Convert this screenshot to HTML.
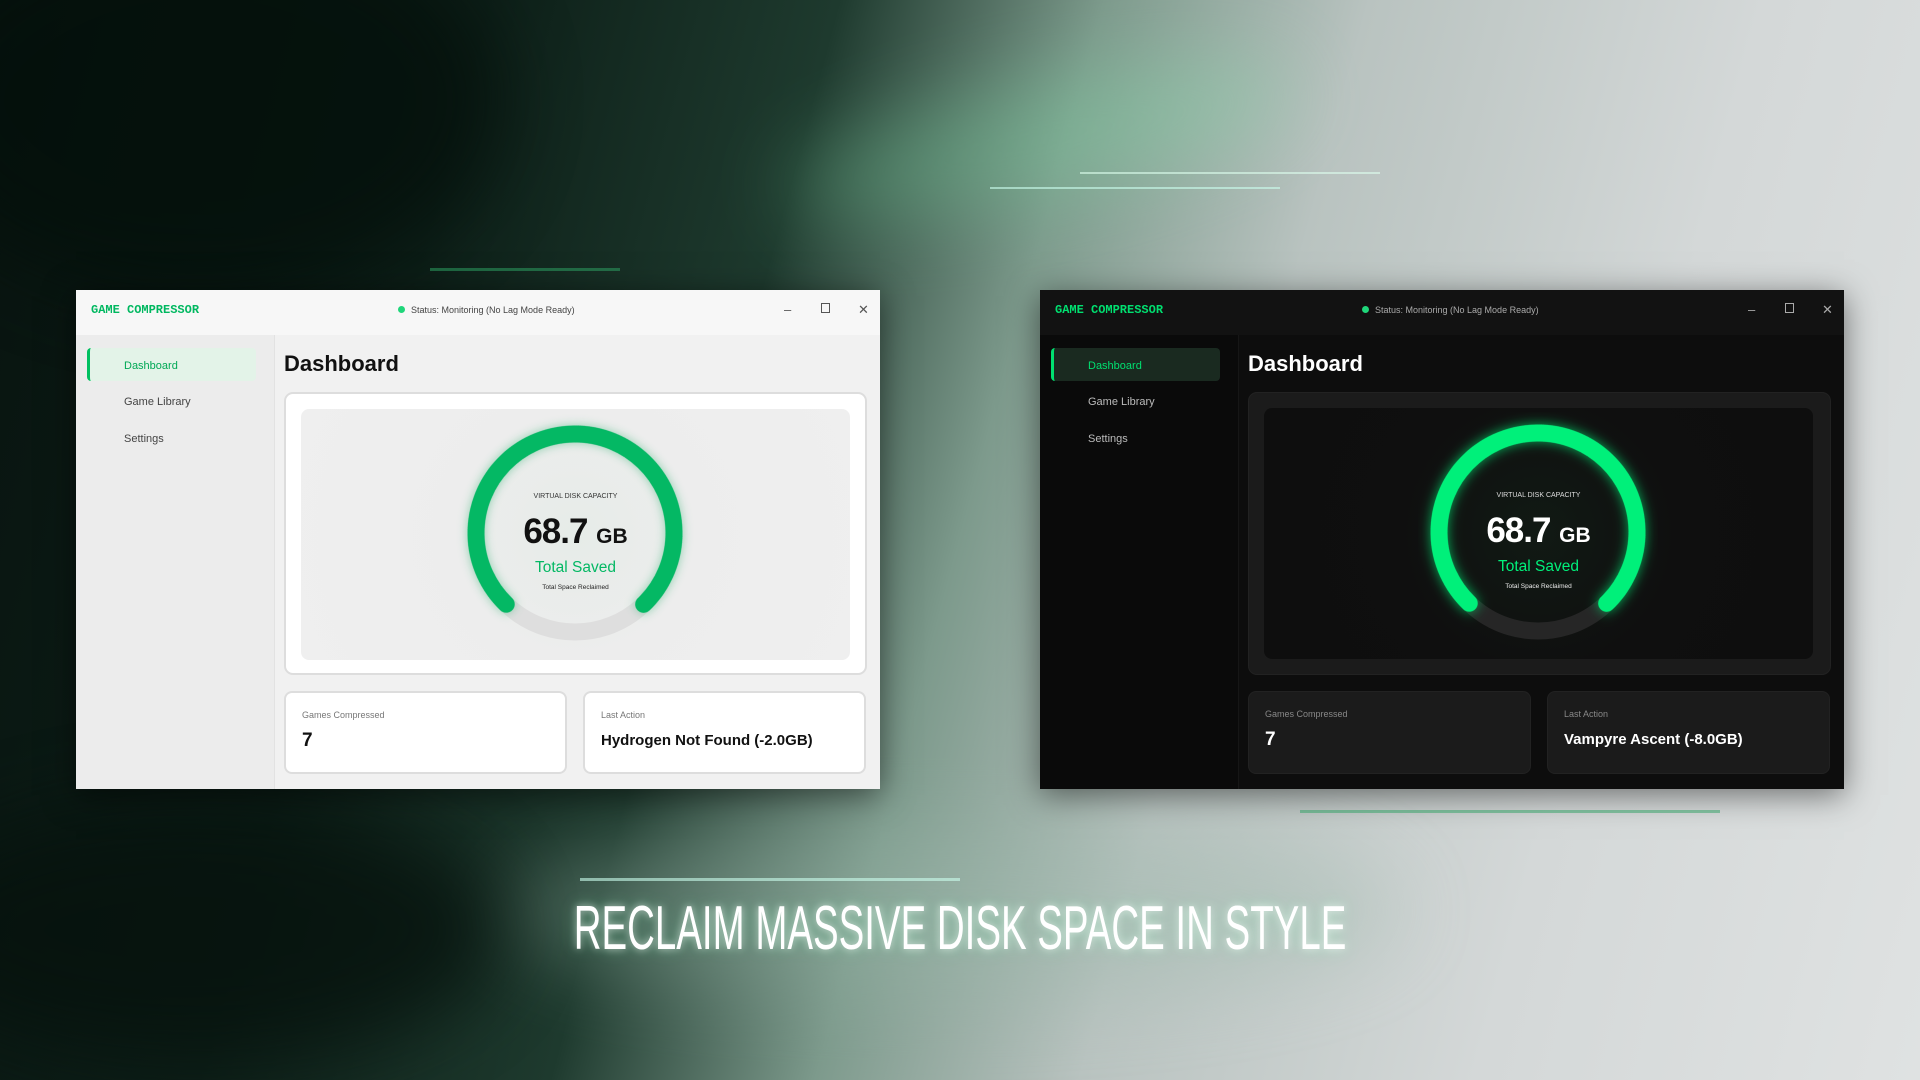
<!DOCTYPE html>
<html style="overflow:hidden;width:1920px;height:1080px"><head><meta charset="utf-8"><style>
*{margin:0;padding:0;box-sizing:border-box}
html,body{width:1920px;height:1080px;overflow:hidden}
body{position:relative;font-family:"Liberation Sans",sans-serif;
background:linear-gradient(105deg,#08130f 0%,#0d1f18 22%,#1e3a2e 38%,#7d9a8c 50%,#b9c3c0 62%,#d4d8d8 80%,#dfe2e2 100%)}
#bg{position:absolute;left:0;top:0;width:1920px;height:1080px;overflow:hidden}
.glow{position:absolute;border-radius:50%;filter:blur(40px)}
.line{position:absolute;height:3px;background:#2fae6a;opacity:.5}
.win{position:absolute;top:290px;width:804px;height:499px;overflow:hidden;box-shadow:0 6px 30px rgba(0,0,0,.5)}
.tb{position:absolute;left:0;top:0;width:100%;height:45px}
.logo{position:absolute;left:15px;top:13px;font:bold 12px "Liberation Mono",monospace;color:#00b860;letter-spacing:0}
.status{position:absolute;left:322px;top:15px;font-size:9px}
.status i{display:inline-block;width:7px;height:7px;border-radius:50%;background:#1fd67a;margin-right:6px;vertical-align:0}
.ctl{position:absolute;top:12px;font-size:13px}
.side{position:absolute;left:0;top:45px;width:199px;bottom:0}
.nav{position:absolute;left:11px;width:169px;height:33px;font-size:11px;padding:12px 0 0 37px}
.nav.act{border-left:3px solid #00c060;border-radius:4px;padding-left:34px}
.foot{position:absolute;left:8px;top:459px;width:172px;height:35px;border-radius:6px;text-align:center;font-size:7.5px;padding-top:5px;line-height:12px}
.main{position:absolute;left:199px;top:45px;right:0;bottom:0}
h1{position:absolute;left:9px;top:16px;font-size:22px;font-weight:bold}
.card{position:absolute;left:9px;top:57px;width:583px;height:283px;border-radius:9px}
.inner{position:absolute;left:15px;top:15px;width:549px;height:251px;border-radius:8px;overflow:hidden}
.g{position:absolute;left:154px;top:4px;width:240px;height:240px}
.t{position:absolute;width:100%;text-align:center;left:0}
.sc{position:absolute;top:356px;width:283px;height:83px;border-radius:8px}
.sc .l{position:absolute;left:16px;top:17px;font-size:9px}
.sc .v{position:absolute;left:16px;top:37px;font-weight:bold}
</style></head><body>
<div id="bg">
<div class="glow" style="left:780px;top:80px;width:520px;height:120px;background:#7fe0a8;opacity:.3;transform:rotate(-12deg)"></div>
<div class="glow" style="left:500px;top:820px;width:900px;height:180px;background:#9ab8aa;opacity:.35"></div>
<div class="glow" style="left:-100px;top:-100px;width:600px;height:400px;background:#04100b;opacity:.8"></div>
<div class="glow" style="left:-100px;top:800px;width:600px;height:260px;background:#06120d;opacity:.8"></div>
<div class="line" style="left:990px;top:187px;width:290px;height:2px;background:#cfe;opacity:.6"></div>
<div class="line" style="left:1080px;top:172px;width:300px;height:2px;background:#dfe;opacity:.6"></div>
<div class="line" style="left:430px;top:268px;width:190px"></div>
<div class="line" style="left:1300px;top:810px;width:420px"></div>
<div class="line" style="left:580px;top:878px;width:380px;background:#cfe;opacity:.6"></div>
<div style="position:absolute;left:0;top:893px;width:1920px;text-align:center;white-space:nowrap">
 <span style="display:inline-block;font-family:'Liberation Sans Narrow','Liberation Sans',sans-serif;font-size:62px;color:#fff;transform:scaleX(.62);transform-origin:center;text-shadow:0 0 10px rgba(255,255,255,.6),0 0 20px rgba(120,255,180,.4)">RECLAIM MASSIVE DISK SPACE IN STYLE</span>
</div>
</div>

<!-- light window -->
<div class="win" style="left:76px;background:#f4f4f4">
 <div class="tb" style="background:#f7f7f7">
  <div class="logo">GAME COMPRESSOR</div>
  <div class="status" style="color:#444"><i></i>Status: Monitoring (No Lag Mode Ready)</div>
  <div class="ctl" style="left:708px;color:#555">–</div>
  <div class="ctl" style="left:745px;top:13px;width:9px;height:10px;border:1.2px solid #555"></div>
  <div class="ctl" style="left:782px;color:#555">✕</div>
 </div>
 <div class="side" style="background:#ececec;border-right:1px solid #e2e2e2">
  <div class="nav act" style="top:13px;background:#e3f3e8;color:#00a855">Dashboard</div>
  <div class="nav" style="top:49px;color:#444">Game Library</div>
  <div class="nav" style="top:86px;color:#444">Settings</div>
  <div class="foot" style="background:#e7e7e7;color:#999">GameCompressor v0.9<br><span style="color:#bbb;font-size:6.5px">Stonepit Sons Software</span></div>
 </div>
 <div class="main" style="background:#f1f1f1">
  <h1 style="color:#111">Dashboard</h1>
  <div class="card" style="background:#fff;border:2px solid #ddd">
   <div class="inner" style="background:radial-gradient(circle at 50% 50%,#e6ece8 0,#ededed 40%,#efefef 100%)">
    <svg class="g" viewBox="0 0 240 240"><circle cx="120" cy="120" r="99" fill="none" stroke="#dedede" stroke-width="17"/>
     <circle cx="120" cy="120" r="99" fill="none" stroke="#04b864" stroke-width="17" stroke-linecap="round" stroke-dasharray="470 1000" transform="rotate(134 120 120)" style="filter:drop-shadow(0 0 5px rgba(0,160,80,.4))"/></svg>
    <div class="t" style="top:84px;font-size:7px;color:#333">VIRTUAL DISK CAPACITY</div>
    <div class="t" style="top:103px;font-size:35px;font-weight:bold;color:#111;letter-spacing:-1px">68.7 <span style="font-size:21px;letter-spacing:0">GB</span></div>
    <div class="t" style="top:150px;font-size:15.5px;color:#04b864">Total Saved</div>
    <div class="t" style="top:175px;font-size:6.5px;color:#222">Total Space Reclaimed</div>
   </div>
  </div>
  <div class="sc" style="left:9px;background:#fff;border:2px solid #ddd"><div class="l" style="color:#777">Games Compressed</div><div class="v" style="font-size:19px;color:#111">7</div></div>
  <div class="sc" style="left:308px;background:#fff;border:2px solid #ddd"><div class="l" style="color:#777">Last Action</div><div class="v" style="font-size:15px;color:#111;top:39px">Hydrogen Not Found (-2.0GB)</div></div>
 </div>
</div>

<!-- dark window -->
<div class="win" style="left:1040px;background:#0c0c0c">
 <div class="tb" style="background:#121212">
  <div class="logo" style="color:#00e070">GAME COMPRESSOR</div>
  <div class="status" style="color:#aaa"><i></i>Status: Monitoring (No Lag Mode Ready)</div>
  <div class="ctl" style="left:708px;color:#aaa">–</div>
  <div class="ctl" style="left:745px;top:13px;width:9px;height:10px;border:1.2px solid #aaa"></div>
  <div class="ctl" style="left:782px;color:#aaa">✕</div>
 </div>
 <div class="side" style="background:#0a0a0a;border-right:1px solid #161616">
  <div class="nav act" style="top:13px;background:#1a2a20;color:#00e070;border-left-color:#00e070">Dashboard</div>
  <div class="nav" style="top:49px;color:#bbb">Game Library</div>
  <div class="nav" style="top:86px;color:#bbb">Settings</div>
  <div class="foot" style="background:#111;color:#555">GameCompressor v0.9<br><span style="color:#444;font-size:6.5px">Stonepit Sons Software</span></div>
 </div>
 <div class="main" style="background:#0d0d0d">
  <h1 style="color:#fff">Dashboard</h1>
  <div class="card" style="background:#1b1b1b;border:1px solid #222">
   <div class="inner" style="background:radial-gradient(circle at 50% 50%,#111a14 0,#0f0f0f 45%,#0e0e0e 100%)">
    <svg class="g" viewBox="0 0 240 240"><circle cx="120" cy="120" r="99" fill="none" stroke="#262626" stroke-width="17"/>
     <circle cx="120" cy="120" r="99" fill="none" stroke="#00f07a" stroke-width="17" stroke-linecap="round" stroke-dasharray="470 1000" transform="rotate(134 120 120)" style="filter:drop-shadow(0 0 6px rgba(0,240,120,.7))"/></svg>
    <div class="t" style="top:84px;font-size:7px;color:#ddd">VIRTUAL DISK CAPACITY</div>
    <div class="t" style="top:103px;font-size:35px;font-weight:bold;color:#fff;letter-spacing:-1px">68.7 <span style="font-size:21px;letter-spacing:0">GB</span></div>
    <div class="t" style="top:150px;font-size:15.5px;color:#00f07a">Total Saved</div>
    <div class="t" style="top:175px;font-size:6.5px;color:#eee">Total Space Reclaimed</div>
   </div>
  </div>
  <div class="sc" style="left:9px;background:#1b1b1b;border:1px solid #222"><div class="l" style="color:#888">Games Compressed</div><div class="v" style="font-size:19px;color:#fff">7</div></div>
  <div class="sc" style="left:308px;background:#1b1b1b;border:1px solid #222"><div class="l" style="color:#888">Last Action</div><div class="v" style="font-size:15px;color:#fff;top:39px">Vampyre Ascent (-8.0GB)</div></div>
 </div>
</div>
</body></html>
